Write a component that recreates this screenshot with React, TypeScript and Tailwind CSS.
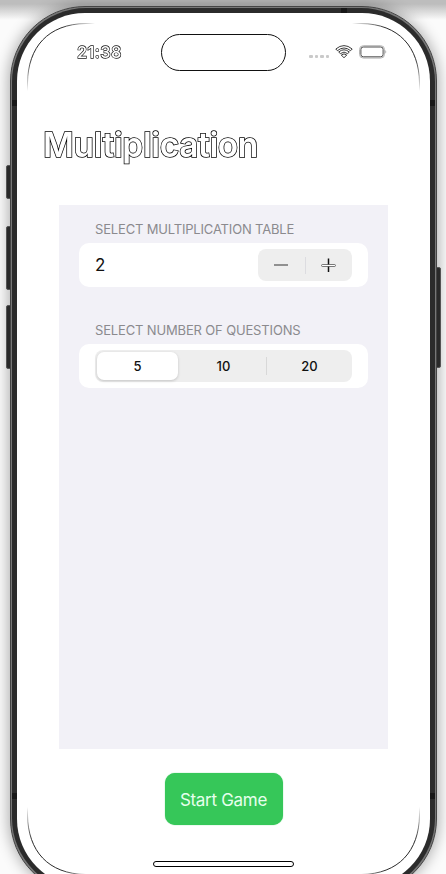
import React from "react";

const outline = "text-white [paint-order:stroke_fill] will-change-transform";

function StatusBar() {
  return (
    <div className="flex h-[37px] items-start pl-[60px]">
      <div className={`mt-[8px] w-[84px] whitespace-nowrap text-[16.5px] leading-5 font-medium tracking-[0.4px] [-webkit-text-stroke:1.3px_#111] ${outline}`}>21:38</div>
      <div className="h-[37px] w-[125px] shrink-0 rounded-full border border-[#111]" />
      <div className="mt-[9px] ml-[23px] flex h-[18px] items-center">
        <div className="mt-[9px] mr-[6px] flex gap-[2px]">
          {[0, 1, 2, 3].map((i) => (
            <i key={i} className="block size-[3.5px] rounded-[1px] bg-[#cacaca]" />
          ))}
        </div>
        <svg className="mr-[6px] shrink-0" width="18" height="14" viewBox="0 0 18 14" fill="none" stroke="#1a1a1a" strokeWidth="0.85">
          <path d="M.8 4Q9-2.8 17.2 4L15.6 5.7Q9 .3 2.4 5.7Z" />
          <path d="M3.7 7Q9 2.6 14.3 7L12.6 8.6Q9 5.6 5.4 8.6Z" />
          <path d="M6.3 10Q9 7.8 11.7 10L9 12.8Z" />
        </svg>
        <svg className="shrink-0" width="28" height="14" viewBox="0 0 28 14" fill="none">
          <rect x=".5" y=".7" width="25" height="12.4" rx="3.8" stroke="#b5b5b5" />
          <rect x="1.9" y="2" width="22.2" height="9.8" rx="2.4" stroke="#222" strokeWidth="0.8" />
          <path d="M26.4 4.8Q28 6.8 26.4 8.8Z" fill="#999" />
        </svg>
      </div>
    </div>
  );
}

function Stepper() {
  return (
    <div className="flex h-8 w-[94px] items-center rounded-lg bg-[#eeeeee]">
      <button className="flex flex-1 justify-center" aria-label="Decrease">
        <span className="block h-[2px] w-[14px] bg-[#909090]" />
      </button>
      <span className="h-[17px] w-px bg-[#dcdce0]" />
      <button className="flex flex-1 justify-center" aria-label="Increase">
        <svg width="15" height="15" viewBox="0 0 15 15">
          <path d="M7.5 .5V14" stroke="#111" strokeWidth="1.5" />
          <rect x=".6" y="6.5" width="13.8" height="2" rx=".8" fill="#fff" stroke="#333" strokeWidth=".65" />
        </svg>
      </button>
    </div>
  );
}

function Segments() {
  return (
    <div className="flex h-8 w-full items-center rounded-lg bg-[#eeeeee] text-[13px] font-medium text-[#111]">
      <button className="ml-[2px] h-7 w-[81px] rounded-[7px] bg-white pt-[2px] font-medium shadow-[0_1px_3px_rgba(0,0,0,0.18)]">5</button>
      <button className="w-[88px] pt-[2px] pl-[3px]">10</button>
      <span className="h-[18px] w-px bg-[#d8d8d8]" />
      <button className="flex-1 pt-[2px]">20</button>
    </div>
  );
}

export default function App() {
  return (
    <div className="relative h-[874px] w-[446px] overflow-hidden bg-[#fbfbfb] font-[Inter,'Liberation_Sans',sans-serif]">
      <div className="absolute inset-x-0 top-0 h-[20px] bg-linear-to-b from-[#bdbdbd] from-20% to-transparent" />
      <div className="absolute top-[6px] left-[10px] h-[888px] w-[427px] rounded-[76px] shadow-[0_0_14px_2px_rgba(0,0,0,0.3)]" />
      <div className="absolute top-[165px] left-[6px] h-[34px] w-[6px] rounded-l-[2px] border border-[#555] bg-[#292929]" />
      <div className="absolute top-[226px] left-[6px] h-[64px] w-[6px] rounded-l-[2px] border border-[#555] bg-[#292929]" />
      <div className="absolute top-[305px] left-[6px] h-[64px] w-[6px] rounded-l-[2px] border border-[#555] bg-[#292929]" />
      <div className="absolute top-[267px] left-[435px] h-[101px] w-[6px] rounded-r-[2px] border border-[#555] bg-[#292929]" />

      <main className="relative mt-[6px] ml-[10px] h-[888px] w-[427px] rounded-[75px] border border-[#444] bg-[#777] p-px">
        <div className="relative h-full rounded-[74px] bg-[#2b2b2b] p-[5px]">
          <i className="absolute top-[92px] left-0 h-[6px] w-[5px] bg-[#171717]" />
          <i className="absolute top-[92px] right-0 h-[6px] w-[5px] bg-[#171717]" />
          <i className="absolute top-[785px] left-0 h-[6px] w-[5px] bg-[#171717]" />
          <i className="absolute top-[785px] right-0 h-[6px] w-[5px] bg-[#171717]" />
          <i className="absolute top-0 left-[329px] h-[5px] w-[6px] bg-[#171717]" />
          <div className="relative h-full rounded-[68px] bg-white pt-[21px]">
            <svg className="pointer-events-none absolute inset-0" width="413" height="874" viewBox="17 13 413 874" fill="none">
              <defs>
                <radialGradient id="tl" gradientUnits="userSpaceOnUse" cx="45" cy="41" r="53">
                  <stop offset=".4" stopColor="#111" /><stop offset="1" stopColor="#111" stopOpacity="0" />
                </radialGradient>
                <radialGradient id="tr" gradientUnits="userSpaceOnUse" cx="402" cy="41" r="53">
                  <stop offset=".4" stopColor="#111" /><stop offset="1" stopColor="#111" stopOpacity="0" />
                </radialGradient>
                <radialGradient id="bl" gradientUnits="userSpaceOnUse" cx="45" cy="857" r="53">
                  <stop offset=".4" stopColor="#111" /><stop offset="1" stopColor="#111" stopOpacity="0" />
                </radialGradient>
                <radialGradient id="br" gradientUnits="userSpaceOnUse" cx="402" cy="857" r="53">
                  <stop offset=".4" stopColor="#111" /><stop offset="1" stopColor="#111" stopOpacity="0" />
                </radialGradient>
              </defs>
              <path d="M27.5 93V83C28 47 48 24 86 23.5H97" stroke="url(#tl)" strokeWidth=".9" />
              <path d="M419.5 93V83C419 47 399 24 361 23.5H350" stroke="url(#tr)" strokeWidth=".9" />
              <path d="M27.5 805V815C28 851 48 874 86 874.5H97" stroke="url(#bl)" strokeWidth=".9" />
              <path d="M419.5 805V815C419 851 399 874 361 874.5H350" stroke="url(#br)" strokeWidth=".9" />
            </svg>
            <StatusBar />
            <h1 className={`mt-[53px] ml-[26px] w-fit whitespace-nowrap text-[33.5px] leading-[42px] font-semibold tracking-[-0.38px] [-webkit-text-stroke:1.5px_#000] ${outline}`}>Multiplication</h1>
            <section className="mt-[39px] ml-[42px] h-[544px] w-[329px] bg-[#f2f1f7] px-5 pt-[16px]">
              <h2 className="ml-4 w-fit whitespace-nowrap text-[13px] leading-4 font-normal tracking-[-0.17px] text-[#8b8a8e]">SELECT MULTIPLICATION TABLE</h2>
              <div className="mt-[6px] flex h-[44px] items-center justify-between rounded-[10px] bg-white px-4">
                <span className="pt-[2px] text-[17px] text-[#111]">2</span>
                <Stepper />
              </div>
              <h2 className="mt-[35px] ml-4 w-fit whitespace-nowrap text-[13px] leading-4 font-normal tracking-[-0.15px] text-[#8b8a8e]">SELECT NUMBER OF QUESTIONS</h2>
              <div className="mt-[6px] flex h-[44px] items-center rounded-[10px] bg-white px-4">
                <Segments />
              </div>
            </section>
            <button className="mt-6 ml-[147.5px] block h-[52px] w-[118px] rounded-[10px] bg-[#36c759] pt-[3px] text-[17px] tracking-[-0.3px] whitespace-nowrap text-[#e6ffed] shadow-[0_0_1px_#36c759]">Start Game</button>
            <div className="mt-[36px] ml-[136px] h-[6px] w-[141px] rounded-full border border-black bg-white" />
          </div>
        </div>
      </main>
    </div>
  );
}
